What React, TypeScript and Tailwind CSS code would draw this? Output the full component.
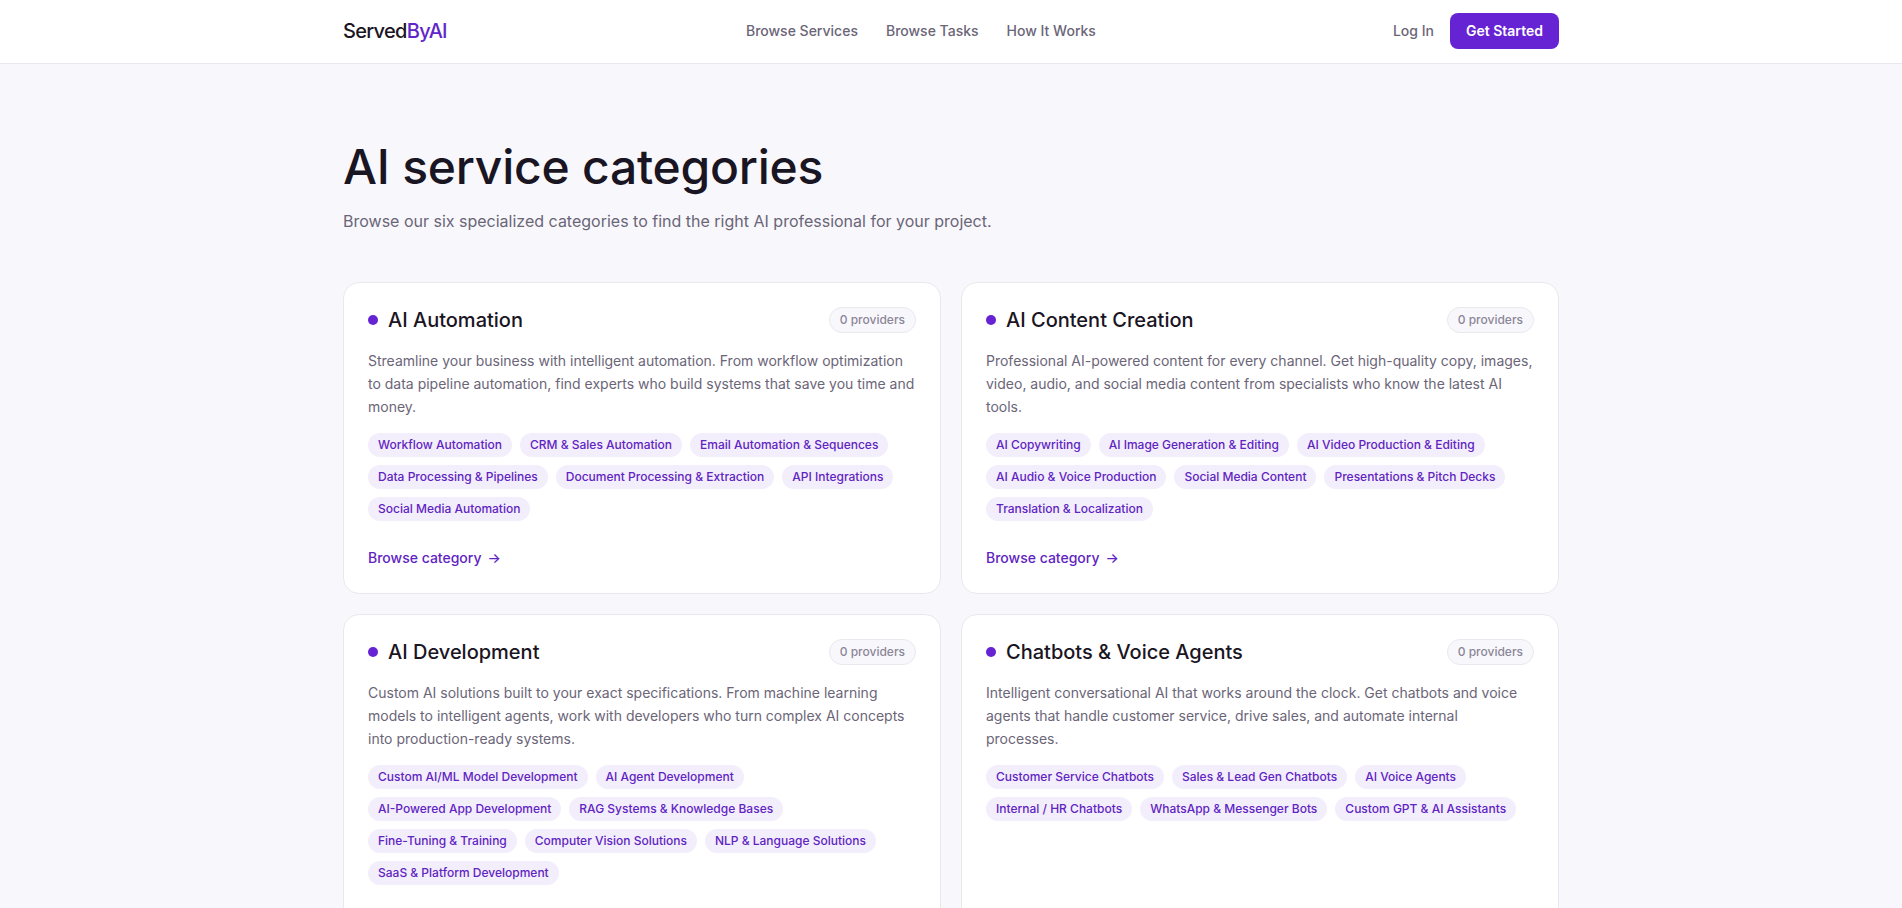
const cards = [
  {
    title: "AI Automation",
    desc: "Streamline your business with intelligent automation. From workflow optimization to data pipeline automation, find experts who build systems that save you time and money.",
    tags: ["Workflow Automation", "CRM & Sales Automation", "Email Automation & Sequences", "Data Processing & Pipelines", "Document Processing & Extraction", "API Integrations", "Social Media Automation"],
  },
  {
    title: "AI Content Creation",
    desc: "Professional AI-powered content for every channel. Get high-quality copy, images, video, audio, and social media content from specialists who know the latest AI tools.",
    tags: ["AI Copywriting", "AI Image Generation & Editing", "AI Video Production & Editing", "AI Audio & Voice Production", "Social Media Content", "Presentations & Pitch Decks", "Translation & Localization"],
  },
  {
    title: "AI Development",
    desc: "Custom AI solutions built to your exact specifications. From machine learning models to intelligent agents, work with developers who turn complex AI concepts into production-ready systems.",
    tags: ["Custom AI/ML Model Development", "AI Agent Development", "AI-Powered App Development", "RAG Systems & Knowledge Bases", "Fine-Tuning & Training", "Computer Vision Solutions", "NLP & Language Solutions", "SaaS & Platform Development"],
  },
  {
    title: "Chatbots & Voice Agents",
    desc: "Intelligent conversational AI that works around the clock. Get chatbots and voice agents that handle customer service, drive sales, and automate internal processes.",
    tags: ["Customer Service Chatbots", "Sales & Lead Gen Chatbots", "AI Voice Agents", "Internal / HR Chatbots", "WhatsApp & Messenger Bots", "Custom GPT & AI Assistants"],
  },
];

export default function App() {
  return (
    <div className="min-h-screen bg-[#f8f8fc] font-['Inter',sans-serif] text-[#1a1523]">
      <header className="h-16 border-b border-[#e8e8ee] bg-white">
        <div className="mx-auto flex h-[62px] max-w-[1280px] items-center justify-between px-8">
          <a className="text-xl font-medium tracking-[-0.035em]">
            Served<span className="text-[#6126c9]">ByAI</span>
          </a>
          <nav className="ml-[2px] flex items-center gap-7 text-sm font-medium text-[#6b6578]">
            <a>Browse Services</a>
            <a>Browse Tasks</a>
            <a>How It Works</a>
          </nav>
          <div className="flex items-center gap-4 text-sm font-medium">
            <a className="text-[#6b6578]">Log In</a>
            <a className="flex h-9 items-center rounded-lg bg-[#6623d3] px-4 font-semibold text-white">Get Started</a>
          </div>
        </div>
      </header>
      <main className="mx-auto max-w-[1280px] px-8 pt-[77px]">
        <h1 className="text-5xl leading-[1.1] font-medium tracking-[-0.005em]">AI service categories</h1>
        <p className="mt-[15px] mb-[49px] text-base text-[#6b6578]">
          Browse our six specialized categories to find the right AI professional for your project.
        </p>
        <div className="grid grid-cols-2 gap-5 pb-16">
          {cards.map((c) => (
            <div key={c.title} className="flex flex-col rounded-2xl border border-[#e8e8ee] bg-white px-6 pt-[23px] pb-[25px]">
              <div className="flex items-center justify-between">
                <div className="flex items-center gap-2.5">
                  <span className="size-2.5 rounded-full bg-[#6623d3]" />
                  <h2 className="text-xl font-medium">{c.title}</h2>
                </div>
                <span className="rounded-full border border-[#e8e8ee] bg-[#f8f8fc] px-2.5 py-1 text-xs font-medium text-[#8b8698]">
                  0 providers
                </span>
              </div>
              <p className="mt-[15px] text-sm leading-[23px] text-[#6b6578]">{c.desc}</p>
              <div className="mt-[15px] flex flex-wrap gap-2">
                {c.tags.map((t) => (
                  <span key={t} className="rounded-full bg-[#f3eefb] px-2.5 py-1 text-xs font-medium text-[#5f24c2]">
                    {t}
                  </span>
                ))}
              </div>
              <a className="mt-auto flex items-center gap-1.5 pt-[27px] text-sm font-medium text-[#5f24c2]">
                Browse category <span>→</span>
              </a>
            </div>
          ))}
        </div>
      </main>
    </div>
  );
}
